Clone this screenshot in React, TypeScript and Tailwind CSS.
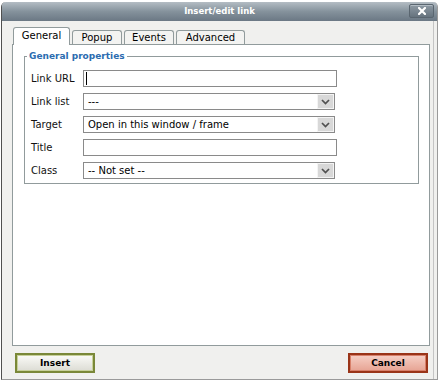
import React from "react";

const Chevron = () => (
  <svg width="9" height="6" viewBox="0 0 9 6">
    <path d="M1 1 L4.5 4.6 L8 1" fill="none" stroke="#505050" strokeWidth="1.7" />
  </svg>
);

function TextBox({ caret }: { caret?: boolean }) {
  return (
    <div className="flex h-[17px] w-[254px] items-center border border-[#8a8a8a] bg-white pl-[2px]">
      {caret ? <span className="h-[13px] w-px bg-black" /> : null}
    </div>
  );
}

function SelectBox({ text }: { text: string }) {
  return (
    <div className="flex h-[17px] w-[252px] border border-[#8a8a8a] bg-white">
      <div className="flex flex-1 items-center pl-[4px] text-[10px] leading-none text-black">{text}</div>
      <div className="flex w-[17px] items-center justify-center border border-[#f4f4f4] bg-[#d8d8d8]">
        <Chevron />
      </div>
    </div>
  );
}

function Row({ label, children }: { label: string; children: React.ReactNode }) {
  return (
    <div className="flex h-[17px] items-center">
      <div className="w-[52px] text-[10px] leading-none text-[#111]">{label}</div>
      {children}
    </div>
  );
}

export default function App() {
  return (
    <div className="h-[384px] w-[439px] bg-white pl-[1px] pt-[2px] font-['DejaVu_Sans',sans-serif]">
      <div className="flex h-[378px] w-[437px] flex-col rounded-t-[5px] border-b border-l border-r border-b-[#9a9a9a] border-l-[#505050] border-r-[#9a9a9a]">
        <div className="relative flex h-[19px] items-center justify-center rounded-t-[4px] bg-gradient-to-b from-[#b4bdc4] via-[#85929c] to-[#6b7884]">
          <span className="text-[8.5px] font-bold leading-none text-white">Insert/edit link</span>
          <div className="absolute right-[3px] top-[2px] flex h-[14px] w-[25px] items-center justify-center rounded-[2px] border border-[#5a6670] bg-gradient-to-b from-[#8e9aa4] to-[#66737e] shadow-[inset_0_1px_0_#b0bac2]">
            <svg width="8" height="8" viewBox="0 0 8 8">
              <path d="M1 1 L7 7 M7 1 L1 7" stroke="white" strokeWidth="2.2" strokeLinecap="square" />
            </svg>
          </div>
        </div>
        <div className="flex flex-1 bg-[#f0f0ee] pr-[3px]">
          <div className="flex flex-1 flex-col border-r border-[#c4c4c4] pl-[10px]">
            <div className="mt-[6px] flex h-[17px] items-end gap-[2px] pl-[1px] text-[10px] leading-none text-black">
              <div className="relative z-10 -mb-px flex h-[18px] w-[57px] items-center justify-center rounded-t-[3px] border border-b-0 border-[#919b9c] bg-white pb-[1px]">
                General
              </div>
              <div className="flex h-[14px] w-[50px] items-center justify-center rounded-t-[3px] border border-b-0 border-[#919b9c] bg-[#f3f3f1]">
                Popup
              </div>
              <div className="flex h-[14px] w-[50px] items-center justify-center rounded-t-[3px] border border-b-0 border-[#919b9c] bg-[#f3f3f1]">
                Events
              </div>
              <div className="flex h-[14px] w-[69px] items-center justify-center rounded-t-[3px] border border-b-0 border-[#919b9c] bg-[#f3f3f1]">
                Advanced
              </div>
            </div>
            <div className="h-[302px] w-[418px] border border-[#919b9c] bg-white pl-[11px]">
              <fieldset className="mt-[6px] w-[395px] border border-[#919b9c] pb-[4px] pl-[2px]">
                <legend className="px-[2px] text-[9px] font-bold leading-[11px] text-[#2b6cb0]">General properties</legend>
                <div className="flex flex-col gap-[6px] pl-[4px] pt-[8px]">
                  <Row label="Link URL">
                    <TextBox caret />
                  </Row>
                  <Row label="Link list">
                    <SelectBox text="---" />
                  </Row>
                  <Row label="Target">
                    <SelectBox text="Open in this window / frame" />
                  </Row>
                  <Row label="Title">
                    <TextBox />
                  </Row>
                  <Row label="Class">
                    <SelectBox text="-- Not set --" />
                  </Row>
                </div>
              </fieldset>
            </div>
            <div className="mt-[7px] flex w-[418px] items-center justify-between pl-[3px] pr-[2px]">
              <div className="flex h-[20px] w-[80px] items-center justify-center border-2 border-[#7a8838] bg-gradient-to-b from-[#fbfbf8] to-[#dcdcd4] shadow-[inset_0_0_0_1px_#c7d09a]">
                <span className="text-[9px] font-bold leading-none text-black">Insert</span>
              </div>
              <div className="flex h-[20px] w-[80px] items-center justify-center border-2 border-[#9a3418] bg-gradient-to-b from-[#f6d0c6] to-[#e6a393] shadow-[inset_0_0_0_1px_#d8806a]">
                <span className="text-[9px] font-bold leading-none text-black">Cancel</span>
              </div>
            </div>
          </div>
        </div>
      </div>
    </div>
  );
}
